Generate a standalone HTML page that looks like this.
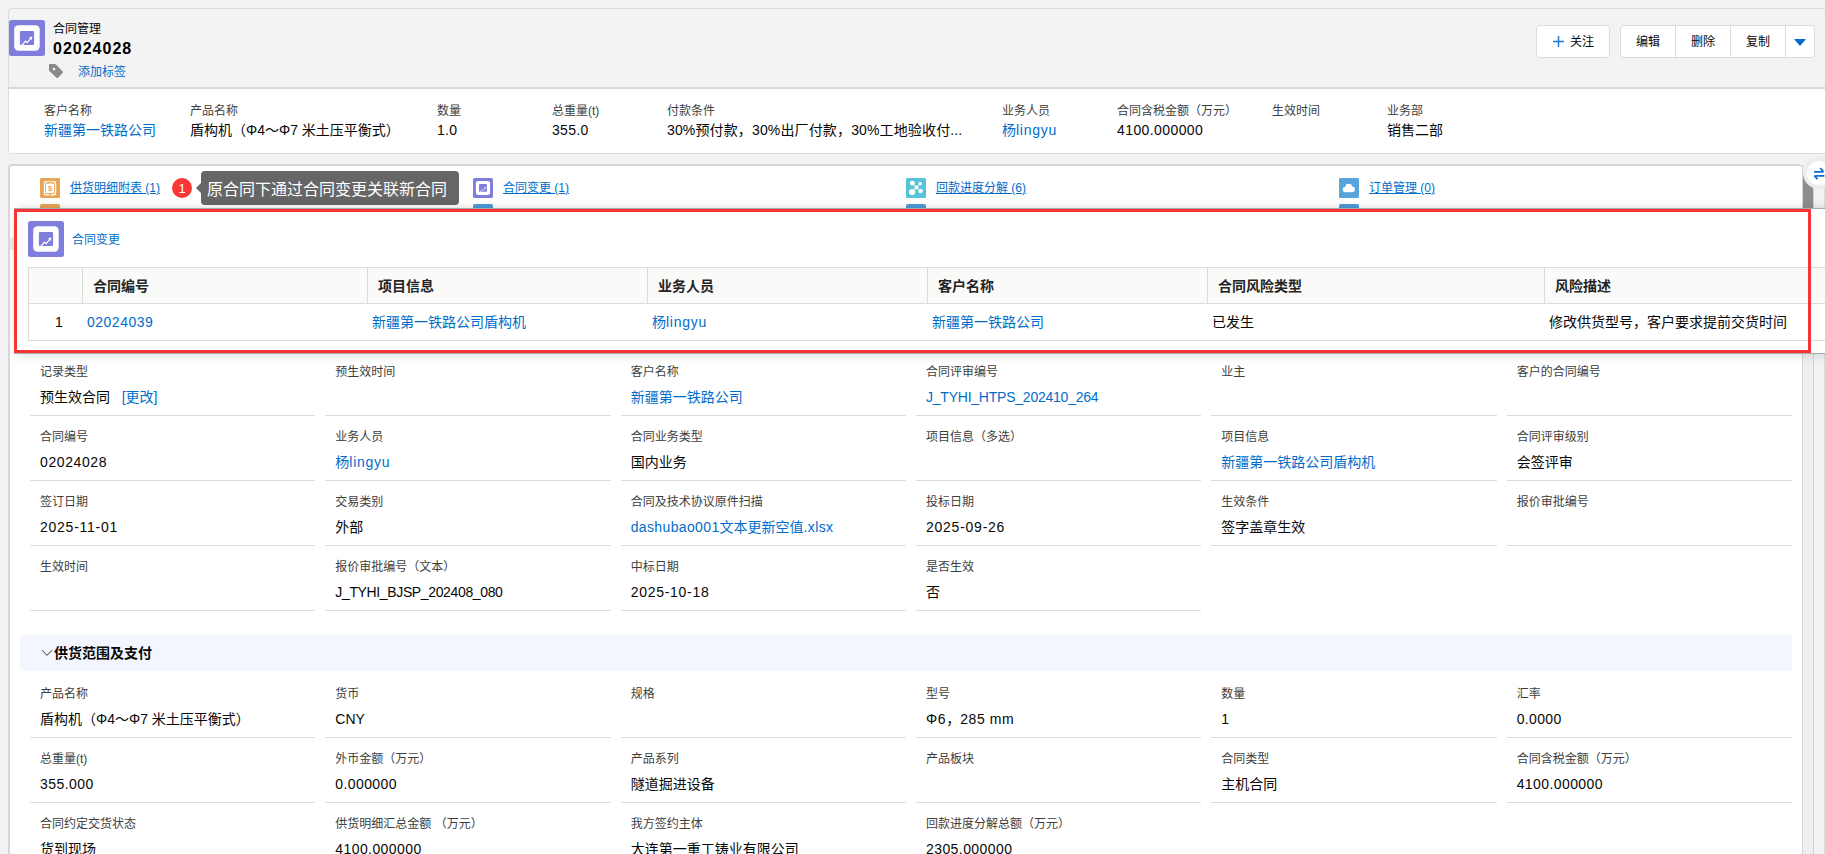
<!DOCTYPE html>
<html lang="zh-CN">
<head>
<meta charset="utf-8">
<title>合同管理 02024028</title>
<style>
*{box-sizing:border-box;margin:0;padding:0}
html,body{width:1825px;height:854px;overflow:hidden}
body{position:relative;background:#f2f2f4;font-family:"Liberation Sans","Noto Sans CJK SC",sans-serif;color:#080707;font-size:14px;line-height:1}
a{color:#006dcc;text-decoration:none}
.abs{position:absolute}
/* header */
#hdr{position:absolute;left:8px;top:8px;width:1840px;height:146px;border:1px solid #dddbda;border-radius:4px;background:#f3f3f3}
#hl{position:absolute;left:0;top:78px;width:1840px;height:66px;background:#fff;border-top:2px solid #dad8d7}
.t12{font-size:12px;line-height:16px;white-space:nowrap}
.t14{font-size:14px;line-height:20px;white-space:nowrap}
.lab{color:#3e3e3c}
.btn{position:absolute;top:25px;height:33px;background:#fff;border:1px solid #dddbda;font-size:12px;line-height:33px;text-align:center;color:#080707;white-space:nowrap}
/* highlights */
.hi{position:absolute;top:103px}
.hi .l{font-size:12px;line-height:17px;color:#3e3e3c;white-space:nowrap}
.hi .v{font-size:14px;line-height:20px;white-space:nowrap}
/* related panel */
#rel{position:absolute;left:8px;top:164px;width:1794px;height:700px;background:#fff;border:2px solid #d9d7d6;border-right:0;border-radius:4px 4px 0 0}
.rl{position:absolute;top:178px;height:20px}
.rl .ic{position:absolute;left:0;top:0;width:20px;height:20px;border-radius:1px}
.rl a{position:absolute;left:30px;top:2px;font-size:12px;line-height:16px;text-decoration:underline;white-space:nowrap}
.rl2{position:absolute;top:204px;width:20px;height:8px;border-radius:2px 2px 0 0}
/* fields */
.f{position:absolute;width:285.33px;height:65px;border-bottom:1px solid #dddbda}
.f .l{position:absolute;left:10px;top:13px;font-size:12px;line-height:16px;color:#3e3e3c;white-space:nowrap}
.f .v{position:absolute;left:10px;top:36px;font-size:14px;line-height:20px;white-space:nowrap}
.c1{left:30px}.c2{left:325.33px}.c3{left:620.67px}.c4{left:916px}.c5{left:1211.33px}.c6{left:1506.67px}
.r1{top:351px}.r2{top:416px}.r3{top:481px}.r4{top:546px}
.s1{top:673px}.s2{top:738px}.s3{top:803px}
#sec{position:absolute;left:20px;top:635px;width:1772px;height:36px;background:#f3f6fe;border-radius:4px}
#sec span{position:absolute;left:34px;top:8px;font-size:14px;line-height:20px;font-weight:bold;white-space:nowrap}
/* popup */
#pop{position:absolute;left:14px;top:208px;width:1830px;height:146px;background:#fff;border-top:1px solid #a4acac;border-bottom:1px solid #ababab;box-shadow:0 -5px 9px -5px rgba(0,0,0,.16),0 5px 10px -4px rgba(0,0,0,.14)}
#red{position:absolute;left:14px;top:209px;width:1797px;height:144px;border:3px solid #f93434}
#tbl{position:absolute;left:28px;top:267px;width:1810px;height:74px;border:1px solid #dddbda;background:#fff}
#tbl .h{position:absolute;left:0;top:0;width:100%;height:36px;background:#fafaf9;border-bottom:1px solid #dddbda}
#tbl .th{position:absolute;top:0;height:35px;border-left:1px solid #dddbda;font-size:14px;line-height:37px;font-weight:bold;padding-left:10px;color:#242424;white-space:nowrap}
#tbl .td{position:absolute;top:36px;font-size:14px;line-height:36px;white-space:nowrap}
</style>
</head>
<body>

<!-- page header -->
<div id="hdr">
  <div id="hl"></div>
</div>
<div class="abs" style="left:9px;top:20px;width:36px;height:36px"><svg width="36" height="36" viewBox="0 0 36 36"><rect width="36" height="36" rx="2.5" fill="#7f7edc"/><rect x="5.2" y="5.2" width="25.5" height="25.5" rx="4.2" fill="#fff"/><rect x="10.9" y="10.9" width="14.2" height="14" rx="1.2" fill="#7f7edc"/><path d="M12.6 25.5 L16.6 21.2 L18.1 22.6 L22 18.2" fill="none" stroke="#fff" stroke-width="1.2"/><path d="M20 17.3 L23.5 16.4 L22.5 20 Z" fill="#fff"/></svg></div>
<div class="abs t12" style="left:53px;top:21px;font-size:12px;color:#080707">合同管理</div>
<div class="abs" style="left:53px;top:38px;font-size:16px;line-height:22px;font-weight:bold;color:#000;white-space:nowrap;letter-spacing:1px">02024028</div>
<svg class="abs" style="left:48px;top:63px" width="16" height="16" viewBox="0 0 16 16"><path d="M2 1.1 H7 Q7.6 1.1 8 1.5 L14.7 8.5 Q15.3 9.2 14.7 9.9 L9.9 14.7 Q9.2 15.3 8.5 14.7 L1.4 7.9 Q1 7.5 1 7 V2.1 Q1 1.1 2 1.1 Z" fill="#8a8a8a"/><circle cx="6" cy="6.1" r="1.4" fill="#f3f3f3"/></svg>
<a class="abs t12" style="left:78px;top:64px">添加标签</a>

<div class="btn" style="left:1536px;width:74px;border-radius:4px;text-align:left;padding-left:33px"><svg style="position:absolute;left:15px;top:9px" width="13" height="13" viewBox="0 0 13 13"><path d="M6.5 1 V12 M1 6.5 H12" stroke="#1b7bd6" stroke-width="1.5" fill="none"/></svg>关注</div>
<div class="btn" style="left:1620px;width:56px;border-radius:4px 0 0 4px">编辑</div>
<div class="btn" style="left:1675px;width:56px;border-radius:0">删除</div>
<div class="btn" style="left:1730px;width:56px;border-radius:0">复制</div>
<div class="btn" style="left:1785px;width:30px;border-radius:0 4px 4px 0"><svg style="position:absolute;left:8px;top:13px" width="12" height="8" viewBox="0 0 12 8"><path d="M0 0 H12 L6 7 Z" fill="#006dcc"/></svg></div>

<!-- highlights -->
<div class="hi" style="left:44px"><div class="l">客户名称</div><div class="v"><a>新疆第一铁路公司</a></div></div>
<div class="hi" style="left:190px"><div class="l">产品名称</div><div class="v">盾构机（Φ4～Φ7 米土压平衡式）</div></div>
<div class="hi" style="left:437px"><div class="l">数量</div><div class="v" style="letter-spacing:.25px">1.0</div></div>
<div class="hi" style="left:552px"><div class="l">总重量(t)</div><div class="v" style="letter-spacing:.33px">355.0</div></div>
<div class="hi" style="left:667px"><div class="l">付款条件</div><div class="v" style="letter-spacing:.14px">30%预付款，30%出厂付款，30%工地验收付...</div></div>
<div class="hi" style="left:1002px"><div class="l">业务人员</div><div class="v"><a>杨<span style="letter-spacing:.75px">lingyu</span></a></div></div>
<div class="hi" style="left:1117px"><div class="l">合同含税金额（万元）</div><div class="v" style="letter-spacing:.41px">4100.000000</div></div>
<div class="hi" style="left:1272px"><div class="l">生效时间</div><div class="v"></div></div>
<div class="hi" style="left:1387px"><div class="l">业务部</div><div class="v">销售二部</div></div>

<!-- main panel -->
<div id="rel"></div>
<div class="abs" style="left:1802px;top:165px;width:1px;height:700px;background:#d6d6d6"></div>
<div class="abs" style="left:1803px;top:165px;width:10px;height:700px;background:#efeff1"></div>
<div class="abs" style="left:1813px;top:165px;width:1px;height:700px;background:#d3d1d1"></div>
<div class="abs" style="left:1814px;top:165px;width:10px;height:700px;background:#f3f3f5"></div>
<div class="abs" style="left:1824px;top:165px;width:1px;height:700px;background:#dcdcdc"></div>
<div class="abs" style="left:1803px;top:172px;width:10px;height:36px;background:#8e8e90"></div>

<!-- related list links -->
<div class="rl" style="left:40px"><svg class="ic" width="20" height="20" viewBox="0 0 20 20"><rect width="20" height="20" rx="1" fill="#e8a557"/><rect x="4.5" y="3.6" width="11" height="13.3" rx="1.6" fill="none" stroke="#fff" stroke-width="1.35"/><rect x="7.6" y="2.4" width="4.8" height="2.6" rx="1" fill="#e8a557"/><rect x="8" y="2.6" width="4" height="2" rx="1" fill="#f4d3ab"/><rect x="9.3" y="16" width="1.4" height="1.6" fill="#e8a557"/><rect x="6" y="5.6" width="8" height="9.6" fill="#fff"/><text x="10" y="13" font-family="Liberation Sans,sans-serif" font-size="7.5" font-weight="bold" fill="#e8a557" text-anchor="middle">$</text></svg><a>供货明细附表 (1)</a></div>
<div class="rl" style="left:473px"><svg class="ic" width="20" height="20" viewBox="0 0 36 36"><rect width="36" height="36" rx="2.7" fill="#7f7edc"/><rect x="5.2" y="5.2" width="25.5" height="25.5" rx="4.2" fill="#fff"/><rect x="10.9" y="10.9" width="14.2" height="14" rx="1.2" fill="#7f7edc"/><path d="M12.6 25.5 L16.6 21.2 L18.1 22.6 L22 18.2" fill="none" stroke="#fff" stroke-width="1.2"/><path d="M20 17.3 L23.5 16.4 L22.5 20 Z" fill="#fff"/></svg><a>合同变更 (1)</a></div>
<div class="rl" style="left:906px"><svg class="ic" width="20" height="20" viewBox="0 0 20 20"><rect width="20" height="20" rx="1" fill="#56c3d9"/><path d="M6.4 5.3 L10.5 9.4 L14.1 5.8 M6.1 14 L10.5 9.4 L14.6 13" stroke="#fff" stroke-opacity=".75" stroke-width="1" fill="none"/><circle cx="6.4" cy="5.3" r="2.45" fill="#fff"/><circle cx="14.1" cy="5.8" r="1.8" fill="#fff"/><circle cx="10.5" cy="9.4" r="2.1" fill="#fff"/><circle cx="6.1" cy="14" r="3.1" fill="#fff"/><circle cx="14.6" cy="13" r="2.3" fill="#fff"/></svg><a>回款进度分解 (6)</a></div>
<div class="rl" style="left:1339px"><svg class="ic" width="20" height="20" viewBox="0 0 20 20"><rect width="20" height="20" rx="1" fill="#5aa4dd"/><circle cx="9.7" cy="9" r="3.3" fill="#fff"/><circle cx="6.5" cy="11.5" r="2.7" fill="#fff"/><circle cx="13.1" cy="11.3" r="2.8" fill="#fff"/><rect x="6.5" y="10" width="6.6" height="4.2" fill="#fff"/></svg><a>订单管理 (0)</a></div>
<div class="rl2" style="left:40px;background:#e8a557"></div>
<div class="rl2" style="left:473px;background:#4f9bd8"></div>
<div class="rl2" style="left:906px;background:#4f9bd8"></div>
<div class="rl2" style="left:1339px;background:#4f9bd8"></div>

<div class="abs" style="left:172px;top:178px;width:20px;height:20px;border-radius:50%;background:#f93636;color:#fff;font-size:13px;line-height:21px;text-align:center">1</div>
<div class="abs" style="left:201px;top:171px;width:258px;height:34px;border-radius:4px;background:#666;color:#fff;font-size:16px;line-height:38px;padding-left:6px;white-space:nowrap">原合同下通过合同变更关联新合同</div>
<div class="abs" style="left:196px;top:183px;width:0;height:0;border:5px solid transparent;border-left:0;border-right:5px solid #666"></div>

<!-- detail fields -->
<div class="f c1 r1"><div class="l">记录类型</div><div class="v">预生效合同 &nbsp; <a>[更改]</a></div></div>
<div class="f c2 r1"><div class="l">预生效时间</div></div>
<div class="f c3 r1"><div class="l">客户名称</div><div class="v"><a>新疆第一铁路公司</a></div></div>
<div class="f c4 r1"><div class="l">合同评审编号</div><div class="v"><a style="letter-spacing:-.23px">J_TYHI_HTPS_202410_264</a></div></div>
<div class="f c5 r1"><div class="l">业主</div></div>
<div class="f c6 r1"><div class="l">客户的合同编号</div></div>

<div class="f c1 r2"><div class="l">合同编号</div><div class="v" style="letter-spacing:.6px">02024028</div></div>
<div class="f c2 r2"><div class="l">业务人员</div><div class="v"><a>杨<span style="letter-spacing:.75px">lingyu</span></a></div></div>
<div class="f c3 r2"><div class="l">合同业务类型</div><div class="v">国内业务</div></div>
<div class="f c4 r2"><div class="l">项目信息（多选）</div></div>
<div class="f c5 r2"><div class="l">项目信息</div><div class="v"><a>新疆第一铁路公司盾构机</a></div></div>
<div class="f c6 r2"><div class="l">合同评审级别</div><div class="v">会签评审</div></div>

<div class="f c1 r3"><div class="l">签订日期</div><div class="v" style="letter-spacing:.75px">2025-11-01</div></div>
<div class="f c2 r3"><div class="l">交易类别</div><div class="v">外部</div></div>
<div class="f c3 r3"><div class="l">合同及技术协议原件扫描</div><div class="v"><a><span style="letter-spacing:.37px">dashubao001</span>文本更新空值<span style="letter-spacing:.37px">.xlsx</span></a></div></div>
<div class="f c4 r3"><div class="l">投标日期</div><div class="v" style="letter-spacing:.75px">2025-09-26</div></div>
<div class="f c5 r3"><div class="l">生效条件</div><div class="v">签字盖章生效</div></div>
<div class="f c6 r3"><div class="l">报价审批编号</div></div>

<div class="f c1 r4"><div class="l">生效时间</div></div>
<div class="f c2 r4"><div class="l">报价审批编号（文本）</div><div class="v" style="letter-spacing:-.36px">J_TYHI_BJSP_202408_080</div></div>
<div class="f c3 r4"><div class="l">中标日期</div><div class="v" style="letter-spacing:.72px">2025-10-18</div></div>
<div class="f c4 r4"><div class="l">是否生效</div><div class="v">否</div></div>

<div id="sec"><svg style="position:absolute;left:21px;top:13px" width="12" height="10" viewBox="0 0 12 10"><path d="M1 2.2 L6 7.4 L11 2.2" fill="none" stroke="#333" stroke-width="1"/></svg><span>供货范围及支付</span></div>

<div class="f c1 s1"><div class="l">产品名称</div><div class="v">盾构机（Φ4～Φ7 米土压平衡式）</div></div>
<div class="f c2 s1"><div class="l">货币</div><div class="v">CNY</div></div>
<div class="f c3 s1"><div class="l">规格</div></div>
<div class="f c4 s1"><div class="l">型号</div><div class="v" style="letter-spacing:.6px">Φ6<span style="letter-spacing:0">，</span>285 mm</div></div>
<div class="f c5 s1"><div class="l">数量</div><div class="v">1</div></div>
<div class="f c6 s1"><div class="l">汇率</div><div class="v" style="letter-spacing:.34px">0.0000</div></div>

<div class="f c1 s2"><div class="l">总重量(t)</div><div class="v" style="letter-spacing:.45px">355.000</div></div>
<div class="f c2 s2"><div class="l">外币金额（万元）</div><div class="v" style="letter-spacing:.39px">0.000000</div></div>
<div class="f c3 s2"><div class="l">产品系列</div><div class="v">隧道掘进设备</div></div>
<div class="f c4 s2"><div class="l">产品板块</div></div>
<div class="f c5 s2"><div class="l">合同类型</div><div class="v">主机合同</div></div>
<div class="f c6 s2"><div class="l">合同含税金额（万元）</div><div class="v" style="letter-spacing:.41px">4100.000000</div></div>

<div class="f c1 s3"><div class="l">合同约定交货状态</div><div class="v">货到现场</div></div>
<div class="f c2 s3"><div class="l">供货明细汇总金额 （万元）</div><div class="v" style="letter-spacing:.41px">4100.000000</div></div>
<div class="f c3 s3"><div class="l">我方签约主体</div><div class="v">大连第一重工铸业有限公司</div></div>
<div class="f c4 s3"><div class="l">回款进度分解总额（万元）</div><div class="v" style="letter-spacing:.42px">2305.000000</div></div>

<div class="abs" style="left:10px;top:237px;width:4px;height:13px;background:#ececee;border-radius:2px 0 0 2px"></div>
<!-- popup -->
<div id="pop"></div>
<div class="abs" style="left:28px;top:221px;width:36px;height:36px"><svg width="36" height="36" viewBox="0 0 36 36"><rect width="36" height="36" rx="2.5" fill="#7f7edc"/><rect x="5.2" y="5.2" width="25.5" height="25.5" rx="4.2" fill="#fff"/><rect x="10.9" y="10.9" width="14.2" height="14" rx="1.2" fill="#7f7edc"/><path d="M12.6 25.5 L16.6 21.2 L18.1 22.6 L22 18.2" fill="none" stroke="#fff" stroke-width="1.2"/><path d="M20 17.3 L23.5 16.4 L22.5 20 Z" fill="#fff"/></svg></div>
<a class="abs t12" style="left:72px;top:232px">合同变更</a>
<div id="tbl">
  <div class="h"></div>
  <div class="th" style="left:53px;width:285px">合同编号</div>
  <div class="th" style="left:338px;width:280px">项目信息</div>
  <div class="th" style="left:618px;width:280px">业务人员</div>
  <div class="th" style="left:898px;width:280px">客户名称</div>
  <div class="th" style="left:1178px;width:337px">合同风险类型</div>
  <div class="th" style="left:1515px;width:294px">风险描述</div>
  <div class="td" style="left:26px">1</div>
  <div class="td" style="left:58px"><a style="letter-spacing:.5px">02024039</a></div>
  <div class="td" style="left:343px"><a>新疆第一铁路公司盾构机</a></div>
  <div class="td" style="left:623px"><a>杨<span style="letter-spacing:.75px">lingyu</span></a></div>
  <div class="td" style="left:903px"><a>新疆第一铁路公司</a></div>
  <div class="td" style="left:1183px">已发生</div>
  <div class="td" style="left:1520px">修改供货型号，客户要求提前交货时间</div>
</div>
<div id="red"></div>

<!-- collapse toggle -->
<div class="abs" style="left:1803px;top:157px;width:32px;height:32px;border-radius:50%;background:#ededef"></div>
<div class="abs" style="left:1807px;top:161px;width:24px;height:24px;border-radius:50%;background:#fff"></div>
<svg class="abs" style="left:1812px;top:165px" width="14" height="16" viewBox="0 0 14 16"><path d="M2 6.8 H11.6 M8.2 3 L11.4 6.6" fill="none" stroke="#0b6fd0" stroke-width="1.8"/><path d="M12.4 10.9 H2.4 M5.6 14.2 L2.4 10.9" fill="none" stroke="#0b6fd0" stroke-width="1.8"/></svg>

</body>
</html>
